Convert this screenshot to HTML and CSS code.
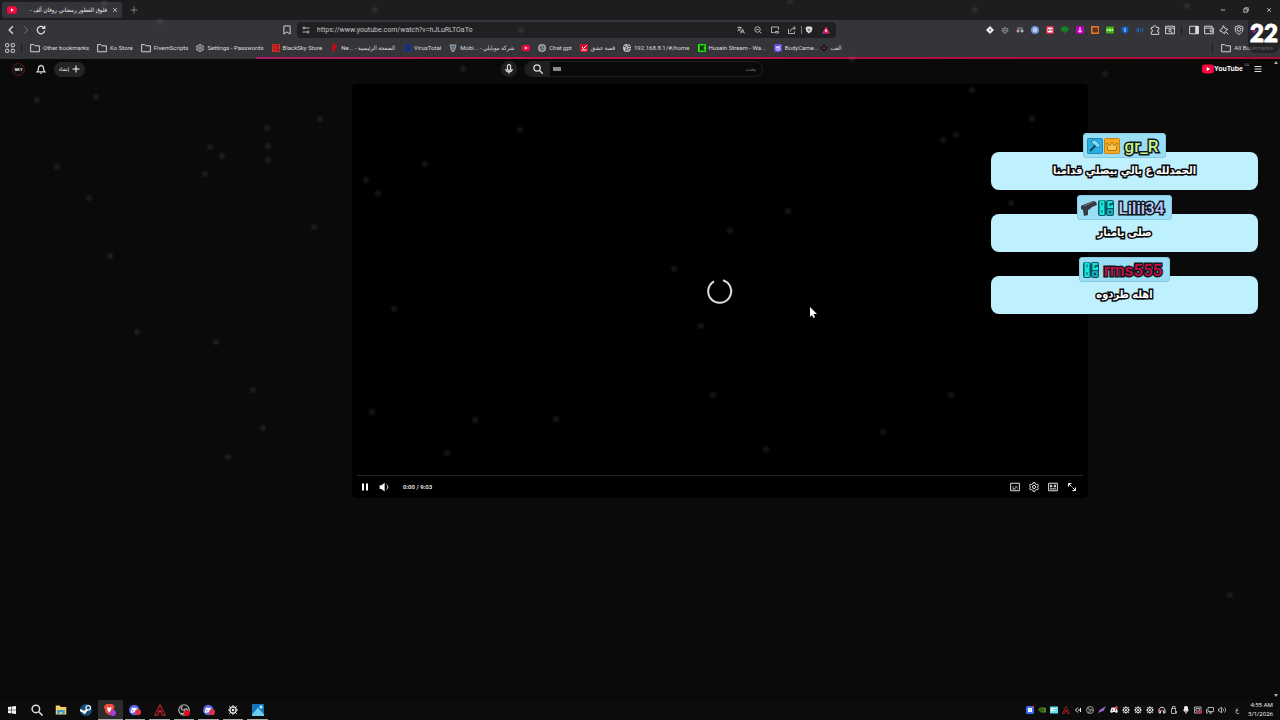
FILE: index.html
```html
<!DOCTYPE html>
<html lang="en">
<head>
<meta charset="utf-8">
<title>YouTube</title>
<link rel="stylesheet" href="styles.css">
</head>
<body>
<svg class="sprite" aria-hidden="true">
  <symbol id="yt" viewBox="0 0 16 16"><rect x="0" y="2" width="16" height="12" rx="4" fill="#f5073f"/><path d="M6.3 5.2v5.6L11 8z" fill="#fff"/></symbol>
  <symbol id="back" viewBox="0 0 16 16"><path d="M11 2 5 8l6 6"/></symbol>
  <symbol id="fwd" viewBox="0 0 16 16"><path d="m5 2 6 6-6 6"/></symbol>
  <symbol id="reload" viewBox="0 0 16 16"><path d="M14 9a6 6 0 1 1-2-5.500L14 5M14 1v4.500h-4.500"/></symbol>
  <symbol id="x" viewBox="0 0 16 16"><path d="m3 3 10 10M13 3 3 13"/></symbol>
  <symbol id="plus" viewBox="0 0 16 16"><path d="M8 1v14M1 8h14"/></symbol>
  <symbol id="min" viewBox="0 0 16 16"><path d="M2 8h12"/></symbol>
  <symbol id="restore" viewBox="0 0 16 16"><path d="M2 5h9v9H2zM5 5V2h9v9h-3"/></symbol>
  <symbol id="mark" viewBox="0 0 16 16"><path d="M3 1.500h10v13L8 11l-5 3.500z"/></symbol>
  <symbol id="tune" viewBox="0 0 16 16"><path d="M6 4h9M1 12h8"/><circle cx="4" cy="4" r="2"/><circle cx="12" cy="12" r="2"/></symbol>
  <symbol id="translate" viewBox="0 0 16 16"><path d="M1 3h8M5 1v2M8 3c-1 4-4 6-7 7M2 5c1 2 3 4 5 5M7 15l4-9 4 9M8.500 12h5"/></symbol>
  <symbol id="zoomout" viewBox="0 0 16 16"><circle cx="7" cy="7" r="5.500"/><path d="m11 11 4 4M4.500 7h5"/></symbol>
  <symbol id="search" viewBox="0 0 16 16"><circle cx="6.500" cy="6.500" r="5"/><path d="m10.500 10.500 5 5"/></symbol>
  <symbol id="laptop" viewBox="0 0 16 16"><path d="M15 8V2H1v11h6M9 14h6v-3H9z"/></symbol>
  <symbol id="share" viewBox="0 0 16 16"><path d="M1 6v9h12v-4M5 11c0-5 3-7 9-7M11 1l4 3-4 4"/></symbol>
  <symbol id="brave" viewBox="0 0 16 16"><path d="M4 1h8l3 3-2 7-5 4-5-4-2-7z" fill="#ddd"/><path d="m5 5 3 1 3-1-1 4-2 2-2-2z" fill="#777"/></symbol>
  <symbol id="bat" viewBox="0 0 16 16"><path d="M8 1 0 15h16z" fill="#e92546"/><path d="m8 6-3 5h6z" fill="#fff"/><path d="m0 15 4-6 4 6z" fill="#8b2fae"/></symbol>
  <symbol id="apps" viewBox="0 0 16 16"><rect x="1" y="1" width="5" height="5" rx="1"/><rect x="10" y="1" width="5" height="5" rx="1"/><rect x="1" y="10" width="5" height="5" rx="1"/><rect x="10" y="10" width="5" height="5" rx="1"/></symbol>
  <symbol id="folder" viewBox="0 0 16 16"><path d="M1 2.500h5l2 2h7v9.500H1z"/></symbol>
  <symbol id="gear" viewBox="0 0 16 16"><path d="m6.500 1-.5 2-2 1-2-.5L1 6l1.500 2L1 10l1 2.500 2-.5 2 1 .5 2h3l.5-2 2-1 2 .5 1-2.500L13.500 8 15 6l-1-2.500-2 .5-2-1-.5-2z"/><circle cx="8" cy="8" r="2.500"/></symbol>
  <symbol id="bsky" viewBox="0 0 16 16"><rect width="16" height="16" rx="2" fill="#e22d24"/><path d="M4 12V6l3-3h5v3L9 8l3 1v3H7l-3 3M1 5l4-4M11 15l4-4" stroke="#51171b" stroke-width="1.500" fill="none"/></symbol>
  <symbol id="ne" viewBox="0 0 16 16"><path d="M4 0h5v16H4zM9 1h4v10H9z" fill="#b90c18"/></symbol>
  <symbol id="vt" viewBox="0 0 16 16"><path d="M1 2h14v12H1l6-6z" fill="#142a78" stroke="#1d3ba6"/></symbol>
  <symbol id="mobi" viewBox="0 0 16 16"><path d="M1 1h14l-2 9-3 6H6l-3-6z" fill="#929aa5"/><path d="M4 5h8M5 8h6M6 11h4" stroke="#39414f"/></symbol>
  <symbol id="gpt" viewBox="0 0 16 16"><circle cx="8" cy="8" r="8" fill="#aaa"/><path d="m8 3 4 2.500v5L8 13l-4-2.500v-5zM4 6l4 2 4-2M8 8v5" fill="none" stroke="#333" stroke-width="1.300"/></symbol>
  <symbol id="esheeq" viewBox="0 0 16 16"><rect width="16" height="16" rx="1" fill="#d80f2b"/><path d="m4 6 3 3 6-6M3 12h10" fill="none" stroke="#fff" stroke-width="2"/></symbol>
  <symbol id="globe" viewBox="0 0 16 16"><circle cx="8" cy="8" r="8" fill="#bdbdbd"/><path d="M2 5c4 0 6 1 5 4-2 1 0 3-1 5M10 1c-2 3 0 4 4 4M10 13c-1-4 2-4 5-4" fill="none" stroke="#333" stroke-width="2"/></symbol>
  <symbol id="kick" viewBox="0 0 16 16"><path d="M0 0h16v16H0z" fill="#25e30f"/><path d="M4 2h3v4l4-4h2v3l-3 3 3 3v3h-2l-4-4v4H4z" fill="#062a05"/></symbol>
  <symbol id="body" viewBox="0 0 16 16"><rect width="16" height="16" rx="3" fill="#6846e6"/><circle cx="8" cy="9" r="4" fill="none" stroke="#fff" stroke-width="1.500"/><path d="M3 5c4 3 7 2 10-2M8 7v3h3" stroke="#fff" fill="none"/></symbol>
  <symbol id="eye" viewBox="0 0 16 16"><path d="m8 1 7 7-7 7-7-7z" fill="#151515"/><circle cx="8" cy="8" r="2.500" fill="#952a37"/></symbol>
  <symbol id="diamond" viewBox="0 0 16 16"><path d="m8 0 8 8-8 8-8-8z" fill="#eee"/><path d="m8 5 3 3-3 3-2-3z" fill="#77777c"/></symbol>
  <symbol id="robot" viewBox="0 0 16 16"><path d="m8 1 3 3h3l1 6-3 3-4 3-4-3-3-3 1-6h3z" fill="#77777b"/><path d="M4 7h3M9 7h3M6 11h4" stroke="#333" stroke-width="1.500"/></symbol>
  <symbol id="spy" viewBox="0 0 16 16"><path d="m4 2 4 1 4-1 3 5H1z" fill="#727179"/><circle cx="4" cy="10" r="3" fill="#d7958b"/><circle cx="12" cy="10" r="3" fill="#9fc3c9"/></symbol>
  <symbol id="orb" viewBox="0 0 16 16"><circle cx="8" cy="8" r="8" fill="#7096e0"/><circle cx="8" cy="8" r="3.500" fill="#adc6ef" stroke="#dae6fb"/></symbol>
  <symbol id="redbox" viewBox="0 0 16 16"><rect width="16" height="16" rx="3" fill="#d52443"/><path d="M3 3h10v10H3z" fill="#fff"/><path d="M4 8h3M9 8h3" stroke="#b51635" stroke-width="3"/></symbol>
  <symbol id="tree" viewBox="0 0 16 16"><path d="M2 2 8 0l5 2 3 5-3 4H9v5H7v-5H2L0 7z" fill="#108625"/></symbol>
  <symbol id="down" viewBox="0 0 16 16"><rect width="16" height="16" rx="2" fill="#b800ad"/><path d="M8 2v10M4 9l4 4 4-4" stroke="#fff" stroke-width="2" fill="none"/></symbol>
  <symbol id="orange" viewBox="0 0 16 16"><path d="M0 0h16v16H0z" fill="#e07628"/><path d="M4 4h9v8H4zM4 8h8" fill="#873711" stroke="#3e2d20"/></symbol>
  <symbol id="green" viewBox="0 0 16 16"><rect y="1" width="16" height="14" rx="2" fill="#41ae13"/><path d="M2 6v4M4 6v4M7 6h2v4H7zM12 6v4M14 6l-2 2 2 2" stroke="#d7ffc6" fill="none"/></symbol>
  <symbol id="bshield" viewBox="0 0 16 16"><path d="m8 0 7 3v5c0 4-4 6-7 8-3-2-7-4-7-8V3z" fill="#0b60c1"/><path d="M8 4v8" stroke="#84bcff" stroke-width="3"/></symbol>
  <symbol id="wave" viewBox="0 0 16 16"><path d="M2 5v6M5 3v10M8 5c3 2 3 4 0 6M11 3c4 3 4 7 0 10" fill="none" stroke="#1672c5" stroke-width="2"/></symbol>
  <symbol id="puzzle" viewBox="0 0 16 16"><path d="M2 4h3c-1-4 6-4 5 0h4v4c-3-1-3 4 0 3v4H2v-4c3 0 3-4 0-4z"/></symbol>
  <symbol id="tabsearch" viewBox="0 0 16 16"><path d="M1 2h14v12H1zM1 5h14"/><circle cx="8" cy="9" r="2"/><path d="m10 11 2 2"/></symbol>
  <symbol id="panel" viewBox="0 0 16 16"><path d="M1 2h14v12H1z"/><path d="M10 2h5v12h-5z" fill="#ddd"/></symbol>
  <symbol id="wallet" viewBox="0 0 16 16"><path d="M13 5V2H1v12h14V5H2M15 8h-5v3h5"/></symbol>
  <symbol id="leo" viewBox="0 0 16 16"><path d="m7 1 2 4 5 2-4 3-1 4-4-3-4-2 4-3zM11 11l4 4"/></symbol>
  <symbol id="vpn" viewBox="0 0 16 16"><path d="m8 1 6 2v5c0 3-3 5-6 7-3-2-6-4-6-7V3z"/><circle cx="8" cy="7" r="3"/></symbol>
  <symbol id="bell" viewBox="0 0 16 16"><path d="M2 12.500c2-2 2-2 2-6a4 4 0 0 1 8 0c0 4 0 4 2 6zM7 15h2M8 1v1"/></symbol>
  <symbol id="mic" viewBox="0 0 16 16"><rect x="5.500" y="1" width="5" height="9" rx="2.500"/><path d="M3 8c0 6 10 6 10 0M8 12v3"/></symbol>
  <symbol id="menu" viewBox="0 0 16 16"><path d="M1 3h14M1 8h14M1 13h14"/></symbol>
  <symbol id="pause" viewBox="0 0 16 16"><path d="M2 1h4v14H2zM10 1h4v14h-4z" fill="#fff"/></symbol>
  <symbol id="vol" viewBox="0 0 16 16"><path d="M1 5h3l5-4v14l-5-4H1z" fill="#fff"/><path d="M12 4c3 2 3 6 0 8"/></symbol>
  <symbol id="volout" viewBox="0 0 16 16"><path d="M1 6h2l4-4v12l-4-4H1zM10 5c1 2 1 4 0 6M13 3c3 3 3 7 0 10"/></symbol>
  <symbol id="cc" viewBox="0 0 16 16"><path d="M1 2h14v12H1zM4 8h2M8 8h4M4 11h5M11 11h1"/></symbol>
  <symbol id="thea" viewBox="0 0 16 16"><path d="M1 2h14v12H1zM4 5v3h2V5zM10 5v3h2V5zM3 11h10"/></symbol>
  <symbol id="full" viewBox="0 0 16 16"><path d="M7 1H1v6M1 1l6 6M15 9v6H9M15 15 9 9"/></symbol>
  <symbol id="win" viewBox="0 0 16 16"><path d="m0 2 7-1v6.500H0zM8 1l8-1v7.500H8zM0 8.500h7V15l-7-1zM8 8.500h8V16l-8-1z" fill="#f3f3f3"/></symbol>
  <symbol id="explorer" viewBox="0 0 16 16"><path d="M1 2h5l2 2h7v10H1z" fill="#f3cf69"/><path d="M3 8h10v6h-3v-3H6v3H3z" fill="#3b9bd5"/></symbol>
  <symbol id="steam" viewBox="0 0 16 16"><circle cx="8" cy="8" r="8" fill="#174e79"/><path d="m0 8 6 3 5-5" stroke="#fff" stroke-width="3"/><circle cx="11" cy="5" r="3" fill="#174e79" stroke="#fff" stroke-width="1.500"/><circle cx="6" cy="11" r="2" fill="#fff"/></symbol>
  <symbol id="lion" viewBox="0 0 16 16"><path d="M3 0h8l3 3-2 8-5 4-5-4-2-8z" fill="#f04b38"/><path d="m4 4 3 1 3-1-1 5-2 2-2-2z" fill="#fff"/><circle cx="12" cy="12" r="4" fill="#9a40d2"/></symbol>
  <symbol id="discord" viewBox="0 0 16 16"><circle cx="7" cy="8" r="7" fill="#5866e8"/><path d="M4 5h6l2 6-3 1-1-1H6l-1 1-3-1z" fill="#fff"/><circle cx="5" cy="9" r="1" fill="#5866e8"/><circle cx="12" cy="11" r="4" fill="#df3048"/></symbol>
  <symbol id="apex" viewBox="0 0 16 16"><path d="m1 15 7-14 7 14h-4L8 8l-3 7zM5 10h6" fill="none" stroke="#b91f31" stroke-width="1.500"/></symbol>
  <symbol id="obs" viewBox="0 0 16 16"><circle cx="8" cy="8" r="7" fill="#171717" stroke="#bbb"/><path d="M8 8c-4 0-5-3-2-5M8 8c3-3 5-1 5 2M8 8c2 4-1 6-4 4" fill="none" stroke="#bbb" stroke-width="1.500"/></symbol>
  <symbol id="rec" viewBox="0 0 16 16"><circle cx="8" cy="8" r="7" fill="#171717" stroke="#bbb"/><path d="M8 8c-4 0-5-3-2-5M8 8c3-3 5-1 5 2M8 8c2 4-1 6-4 4" fill="none" stroke="#bbb" stroke-width="1.500"/><circle cx="12" cy="12" r="4" fill="#e50922"/></symbol>
  <symbol id="cog" viewBox="0 0 16 16"><circle cx="8" cy="8" r="5" fill="#111" stroke="#eee" stroke-width="2"/><path d="M8 0v4M8 12v4M0 8h4M12 8h4M2 2l3 3M11 11l3 3M14 2l-3 3M5 11l-3 3" stroke="#eee" stroke-width="1.500"/><circle cx="8" cy="8" r="2" fill="#eee"/></symbol>
  <symbol id="photo" viewBox="0 0 16 16"><rect width="16" height="16" rx="1" fill="#1475bf"/><path d="m0 14 8-9 8 9v2H0z" fill="#70caef"/><circle cx="12" cy="4" r="2" fill="#d8f4ff"/></symbol>
  <symbol id="bluebox" viewBox="0 0 16 16"><rect width="16" height="16" rx="3" fill="#356cf2"/><path d="M4 4h8v8H4z" fill="#fff"/><path d="M7 7h2v2H7z" fill="#356cf2"/><circle cx="14" cy="2" r="2" fill="#e44"/></symbol>
  <symbol id="nv" viewBox="0 0 16 16"><path d="M0 8c4-7 8-6 16-4v9H6z" fill="#53871c"/><path d="M3 8c3-3 7-3 9 0-3 3-6 3-9 0z" stroke="#152208" fill="none"/></symbol>
  <symbol id="cyan" viewBox="0 0 16 16"><path d="M0 1h16v14H0z" fill="#63ddef"/><path d="M3 11V5h10M3 9h7" stroke="#fff" stroke-width="2" fill="none"/></symbol>
  <symbol id="arrow" viewBox="0 0 16 16"><path d="m8 3-5 5 5 5M13 4v8M8 8h6" stroke="#eee" stroke-width="2" fill="none"/></symbol>
  <symbol id="feather" viewBox="0 0 16 16"><path d="m0 16 3-8L16 0l-5 10-7 2z" fill="#9864d6"/></symbol>
  <symbol id="dc" viewBox="0 0 16 16"><path d="M3 3h10l3 9-4 2-2-2H6l-2 2-4-2z" fill="#eee"/><path d="M4 8h2M10 8h2" stroke="#111" stroke-width="2"/><circle cx="13" cy="3" r="3" fill="#e33548"/></symbol>
  <symbol id="head" viewBox="0 0 16 16"><path d="M2 10C1 0 15 0 14 10M2 9v5h3V9M14 9v5h-3V9" stroke="#ddd" stroke-width="2" fill="none"/><circle cx="8" cy="9" r="2" fill="#d23b48"/></symbol>
  <symbol id="usb" viewBox="0 0 16 16"><path d="M3 5h8v10H3zM5 5V1h5v4M13 10v5"/></symbol>
  <symbol id="micf" viewBox="0 0 16 16"><rect x="4" y="0" width="8" height="11" rx="3" fill="#eee"/><path d="M3 7c0 7 10 7 10 0M8 12v4"/></symbol>
  <symbol id="shot" viewBox="0 0 16 16"><path d="M1 2h13v12H1zM4 5h7v5H4z"/><circle cx="12" cy="12" r="3.500" fill="#e3203f"/></symbol>
  <symbol id="net" viewBox="0 0 16 16"><path d="M4 3h11v8H4zM9 11v3M6 14h7M1 6v8h3"/></symbol>
  <symbol id="gun" viewBox="0 0 16 16"><path d="m0 6 2-1 10-4 3 1 1 3-5 2-2 2-2 1v5l-4 1-1-6-2-1z" fill="#363a42"/><path d="m3 6 9-4" stroke="#727780"/></symbol>
  <symbol id="og" viewBox="0 0 16 16"><rect x="0" y="0" width="8" height="16" rx="2" fill="#0a5564"/><rect x="8" y="0" width="8" height="16" rx="2" fill="#0a5564"/><path d="M2.500 1.500h3v5h-3zM2.500 9h3v5h-3zM14.500 2h-4v5h3.500V5M2 7.500h4" fill="none" stroke="#14ead8" stroke-width="2"/><rect x="9" y="9" width="6" height="6" rx="1" fill="#16a9b6"/><path d="M11 11h2v2h-2z" fill="#0a4655"/></symbol>
  <symbol id="hammer" viewBox="0 0 16 16"><rect x=".5" y=".5" width="15" height="15" rx="1" fill="#27afe4" stroke="#175f83"/><path d="m3 13 6-6" stroke="#17435a" stroke-width="2"/><path d="m5 3 3-1 5 5-2 3-3-3-3-2z" fill="#7edbff" stroke="#17435a"/></symbol>
  <symbol id="crown" viewBox="0 0 16 16"><rect x=".5" y=".5" width="15" height="15" rx="1" fill="#f7a918" stroke="#89601e"/><path d="m3 5 3 3 2-4 2 4 3-3-1 7H4z" fill="#ffc64e" stroke="#5c421a"/></symbol>
</svg>

<header class="browser">
  <div class="tabstrip">
    <div class="tab"><svg class="i"><use href="#yt"/></svg><span class="tab-title" dir="rtl">فلوق الفطور رمضاني روفان ألف -</span><button class="b" aria-label="Close tab"><svg class="i s bold"><use href="#x"/></svg></button></div>
    <button class="b new-tab" aria-label="New tab"><svg class="i s"><use href="#plus"/></svg></button>
    <div class="window-buttons"><button class="b" aria-label="Minimize"><svg class="i s bold"><use href="#min"/></svg></button><button class="b" aria-label="Restore"><svg class="i s bold"><use href="#restore"/></svg></button><button class="b" aria-label="Close"><svg class="i s bold"><use href="#x"/></svg></button></div>
  </div>
  <div class="toolbar">
    <nav class="nav"><button class="b" aria-label="Back"><svg class="i bold"><use href="#back"/></svg></button><button class="b dim" aria-label="Forward"><svg class="i"><use href="#fwd"/></svg></button><button class="b" aria-label="Reload"><svg class="i bold"><use href="#reload"/></svg></button></nav>
    <button class="b save" aria-label="Bookmark"><svg class="i"><use href="#mark"/></svg></button>
    <div class="address"><svg class="i s"><use href="#tune"/></svg><input aria-label="Address" value="https://www.youtube.com/watch?v=hJLuRLTOaTo">
      <button class="b" aria-label="Translate"><svg class="i s"><use href="#translate"/></svg></button><button class="b" aria-label="Zoom"><svg class="i s"><use href="#zoomout"/></svg></button><button class="b" aria-label="Install"><svg class="i s"><use href="#laptop"/></svg></button><button class="b" aria-label="Share"><svg class="i s"><use href="#share"/></svg></button><span class="bar"></span><button class="b" aria-label="Shields"><svg class="i s"><use href="#brave"/></svg></button><button class="b" aria-label="Rewards"><svg class="i s"><use href="#bat"/></svg></button></div>
    <div class="extensions">
      <button class="b" aria-label="Extension 1"><svg class="i s"><use href="#diamond"/></svg></button><button class="b" aria-label="Extension 2"><svg class="i s"><use href="#robot"/></svg></button><button class="b" aria-label="Extension 3"><svg class="i s"><use href="#spy"/></svg></button><button class="b" aria-label="Extension 4"><svg class="i s"><use href="#orb"/></svg></button><button class="b" aria-label="Extension 5"><svg class="i s"><use href="#redbox"/></svg></button><button class="b" aria-label="Extension 6"><svg class="i s"><use href="#tree"/></svg></button><button class="b" aria-label="Extension 7"><svg class="i s"><use href="#down"/></svg></button><button class="b" aria-label="Extension 8"><svg class="i s"><use href="#orange"/></svg></button><button class="b" aria-label="Extension 9"><svg class="i s"><use href="#green"/></svg></button><button class="b" aria-label="Extension 10"><svg class="i s"><use href="#bshield"/></svg></button><button class="b" aria-label="Extension 11"><svg class="i s"><use href="#wave"/></svg></button><button class="b" aria-label="Extensions"><svg class="i"><use href="#puzzle"/></svg></button><button class="b" aria-label="Search tabs"><svg class="i"><use href="#tabsearch"/></svg></button><span class="bar dark"></span><button class="b" aria-label="Sidebar"><svg class="i"><use href="#panel"/></svg></button><button class="b" aria-label="Wallet"><svg class="i"><use href="#wallet"/></svg></button><button class="b" aria-label="Leo"><svg class="i"><use href="#leo"/></svg></button><button class="b" aria-label="VPN"><svg class="i"><use href="#vpn"/></svg></button><button class="b" aria-label="Profile"><svg class="i s"><use href="#down"/></svg></button>
    </div>
  </div>
  <nav class="bookmarks">
    <button class="b" aria-label="Apps"><svg class="i"><use href="#apps"/></svg></button><span class="bar dark"></span>
    <a href="#"><svg class="i"><use href="#folder"/></svg>Other bookmarks</a><a href="#"><svg class="i"><use href="#folder"/></svg>Ko Store</a><a href="#"><svg class="i"><use href="#folder"/></svg>FivemScripts</a><a href="#"><svg class="i s"><use href="#gear"/></svg>Settings - Passwords</a><a href="#"><svg class="i s"><use href="#bsky"/></svg>BlackSky Store</a><a href="#"><svg class="i s"><use href="#ne"/></svg><span>Ne... - <bdi>الصفحة الرئيسية</bdi></span></a><a href="#"><svg class="i s"><use href="#vt"/></svg>VirusTotal</a><a href="#"><svg class="i s"><use href="#mobi"/></svg><span>Mobi... - <bdi>شركة موبايلي</bdi></span></a><a href="#" aria-label="YouTube"><svg class="i s"><use href="#yt"/></svg></a><a href="#"><svg class="i s"><use href="#gpt"/></svg>Chat gpt</a><a href="#"><svg class="i s"><use href="#esheeq"/></svg>قصة عشق</a><a href="#"><svg class="i s"><use href="#globe"/></svg>192.168.8.1/#/home</a><a href="#"><svg class="i s"><use href="#kick"/></svg>Husein Stream - Wa...</a><a href="#"><svg class="i s"><use href="#body"/></svg>BodyCame...</a><a href="#" class="tight"><svg class="i s"><use href="#eye"/></svg>العب</a>
    <a href="#" class="all"><span class="bar dark"></span><svg class="i"><use href="#folder"/></svg>All Bookmarks</a>
  </nav>
  <div class="progress"></div>
</header>

<main class="page">
  <div class="masthead">
    <div class="account"><span class="avatar">SKY</span><button class="b" aria-label="Notifications"><svg class="i bold"><use href="#bell"/></svg></button><button class="create"><span>إنشاء</span><svg class="i s bold"><use href="#plus"/></svg></button></div>
    <div class="finder"><button class="b round" aria-label="Voice search"><svg class="i bold"><use href="#mic"/></svg></button><div class="searchbox"><button class="b" aria-label="Search"><svg class="i bold"><use href="#search"/></svg></button><span class="keys"></span><input dir="rtl" aria-label="Search videos" placeholder="بحث"></div></div>
    <div class="brand"><a href="#" class="logo"><svg class="logo-icon"><use href="#yt"/></svg>YouTube<sup>SA</sup></a><button class="b" aria-label="Menu"><svg class="i s bold"><use href="#menu"/></svg></button></div>
  </div>
  <section class="player">
    <div class="stage"><svg class="spinner" viewBox="0 0 28 28"><path d="M17 3.300a11.500 11.500 0 1 1-9 1"/></svg></div>
    <div class="track"></div>
    <div class="controls"><button class="b" aria-label="Pause"><svg class="i s"><use href="#pause"/></svg></button><button class="b" aria-label="Mute"><svg class="i"><use href="#vol"/></svg></button><span class="time">0:00 / 9:03</span><button class="b" aria-label="Subtitles"><svg class="i"><use href="#cc"/></svg></button><button class="b" aria-label="Settings"><svg class="i"><use href="#gear"/></svg></button><button class="b" aria-label="Theater"><svg class="i"><use href="#thea"/></svg></button><button class="b" aria-label="Full screen"><svg class="i s bold"><use href="#full"/></svg></button></div>
  </section>
</main>

<footer class="taskbar">
  <div class="tasks"><button class="b" aria-label="Start"><svg class="i s"><use href="#win"/></svg></button><button class="b" aria-label="Search"><svg class="i l bold"><use href="#search"/></svg></button><button class="b" aria-label="Files"><svg class="i l"><use href="#explorer"/></svg></button><button class="b" aria-label="Steam"><svg class="i l"><use href="#steam"/></svg></button><button class="b open active" aria-label="Brave"><svg class="i l"><use href="#lion"/></svg></button><button class="b open" aria-label="Discord"><svg class="i l"><use href="#discord"/></svg></button><button class="b open" aria-label="Game"><svg class="i l"><use href="#apex"/></svg></button><button class="b open" aria-label="OBS"><svg class="i l"><use href="#rec"/></svg></button><button class="b open" aria-label="Discord 2"><svg class="i l"><use href="#discord"/></svg></button><button class="b open" aria-label="Tools"><svg class="i"><use href="#cog"/></svg></button><button class="b open" aria-label="Photos"><svg class="i l"><use href="#photo"/></svg></button></div>
  <div class="tray"><svg class="i s"><use href="#bluebox"/></svg><svg class="i s"><use href="#nv"/></svg><svg class="i s"><use href="#cyan"/></svg><svg class="i s"><use href="#apex"/></svg><svg class="i s"><use href="#arrow"/></svg><svg class="i s"><use href="#obs"/></svg><svg class="i s"><use href="#feather"/></svg><svg class="i s"><use href="#dc"/></svg><svg class="i s"><use href="#cog"/></svg><svg class="i s"><use href="#cog"/></svg><svg class="i s"><use href="#cog"/></svg><svg class="i s"><use href="#head"/></svg><svg class="i s"><use href="#usb"/></svg><svg class="i s"><use href="#micf"/></svg><svg class="i s"><use href="#shot"/></svg><svg class="i s"><use href="#net"/></svg><svg class="i s"><use href="#volout"/></svg><span class="lang">ع</span><time class="clock">4:55 AM<br>3/1/2026</time></div>
</footer>

<svg class="snow" id="snow" aria-hidden="true"></svg>
<aside class="chat">
  <article><h2 class="lime"><svg><use href="#hammer"/></svg><svg><use href="#crown"/></svg><span>gr_R</span></h2><p dir="rtl">الحمدلله ع بالي بيصلي قدامنا</p></article>
  <article><h2 class="ice"><svg><use href="#gun"/></svg><svg><use href="#og"/></svg><span>Lilii34</span></h2><p dir="rtl">صلى يامنار</p></article>
  <article><h2 class="crimson"><svg><use href="#og"/></svg><span>rms555</span></h2><p dir="rtl">اهله طردوه</p></article>
</aside>
<div class="counter">22</div>
<div class="scroll-up"></div><div class="scroll-down"></div>
<svg class="cursor" viewBox="0 0 8 12" aria-hidden="true"><path d="M1 0v10l2-2 1.500 3 1.500-1-1.500-3H8z" fill="#fff"/></svg>
<script src="snow.js"></script>
</body>
</html>
```
FILE: styles.css
```css
* { box-sizing: border-box; }
body { margin: 0; min-height: 100vh; display: flex; flex-direction: column; background: #0a0a0a; color: #ddd; font: 6px/8px Roboto, "DejaVu Sans Condensed", sans-serif; overflow: hidden; }
a { color: inherit; text-decoration: none; }
input { min-width: 0; border: 0; padding: 0; outline: 0; background: none; color: inherit; font: inherit; }
.sprite { position: absolute; width: 0; height: 0; }
symbol [fill]:not([fill="none"]):not([stroke]) { stroke: none; }
.i { width: 10px; height: 10px; flex: none; fill: none; stroke: currentColor; stroke-width: 1.5; }
.i.s { width: 8px; height: 8px; }
.i.l { width: 12px; height: 12px; }
.i.bold { stroke-width: 2; }
.b { display: flex; align-items: center; justify-content: center; flex: none; width: 15px; height: 16px; padding: 0; border: 0; background: none; color: inherit; }
.bar { width: 1px; height: 8px; margin: 0 4px; background: #777; flex: none; }
.bar.dark { background: #1d1d20; }
.dim { color: #77777c; }

.tabstrip { display: flex; align-items: center; height: 20px; padding: 0 4px 0 2px; background: #1d1d20; }
.tab { display: flex; align-items: center; width: 120px; height: 16px; padding-left: 5px; border-radius: 3px; background: #353539; }
.tab-title { flex: 1; padding-left: 6px; white-space: nowrap; color: #eee; font: 6px/10px "DejaVu Sans Condensed", "DejaVu Sans", sans-serif; }
.tab .i.s { width: 6px; height: 6px; }
.new-tab { margin-left: 4px; color: #999; }
.window-buttons { display: flex; margin-left: auto; gap: 8px; }
.window-buttons .i.s { width: 6px; height: 6px; }

.toolbar { display: flex; align-items: center; height: 20px; padding-left: 3px; background: #353539; }
.nav { display: flex; }
.save { margin-left: 18%; margin-right: 4px; padding-left: 3px; }
.address { display: flex; align-items: center; flex: 0 1 539px; height: 16px; padding: 0 1px 0 5px; border-radius: 4px; background: #202023; }
.address input { flex: 1; margin-left: 7px; font-size: 7px; line-height: 12px; color: #c4c4c4; }
.address .b { width: 17px; }
.address .bar { margin: 0 -1px 0 0; }
.extensions { display: flex; align-items: center; margin-left: auto; margin-right: 19px; }

.bookmarks { display: flex; align-items: center; height: 17px; padding: 0 7px 2px 2px; gap: 8px; background: #353539; white-space: nowrap; }
.bookmarks .bar { margin: 0 0 0 -4px; }
.bookmarks a { display: flex; align-items: center; gap: 3px; }
.bookmarks .tight { margin-left: -7px; }
.bookmarks .all { margin-left: auto; }
.bookmarks .all .bar { margin: 0 5px 0 0; }
.progress { height: 2px; background: linear-gradient(90deg, #353539 20%, #a91d67 20%, #bd1746 40%, #a50d35); }

.page { flex: 1; }
.masthead { display: grid; grid-template-columns: 1fr auto 1fr; align-items: center; height: 20px; padding-right: 16px; }
.account, .finder, .brand, .searchbox, .create, .logo { display: flex; align-items: center; }
.account { padding-left: 12px; gap: 8px; }
.avatar { width: 13px; height: 13px; border: 1px solid #5c1620; border-radius: 50%; background: #111; color: #fff; font: bold 4px/11px "Liberation Sans", sans-serif; text-align: center; }
.account .b { width: 16px; }
.create { gap: 3px; height: 15px; margin-left: -3px; padding: 0 5px; border: 0; border-radius: 8px; background: #242424; color: #fff; font: 5px/8px "DejaVu Sans Condensed", sans-serif; }
.finder { gap: 7px; }
.round { width: 16px; border-radius: 50%; background: #202020; }
.searchbox { width: 239px; height: 16px; border: 1px solid #202020; border-radius: 8px; overflow: hidden; }
.searchbox .b { width: 25px; background: #202020; }
.keys { width: 8px; height: 4px; margin-left: 3px; background: #888; }
.searchbox input { flex: 1; padding-right: 6px; }
.brand { justify-content: flex-end; gap: 4px; padding-right: 1px; }
.brand .b { width: 10px; }
.logo { color: #fff; font: bold 7px/12px "Liberation Sans", sans-serif; }
.logo-icon { width: 12px; height: 12px; }
.logo sup { align-self: flex-start; font: 4px/4px Roboto, sans-serif; color: #888; margin-left: 1px; }

.player { display: flex; flex-direction: column; width: 57.5%; aspect-ratio: 16 / 9; margin: 5px 0 0 27.5%; border-radius: 5px; background: #000; }
.stage { flex: 1; display: flex; align-items: center; justify-content: center; padding-top: 23px; }
.spinner { width: 28px; height: 28px; fill: none; stroke: #ddd; stroke-width: 2; }
.track { height: 1px; margin: 0 5px; background: #242424; }
.controls { display: flex; align-items: center; height: 22px; padding: 0 7px 0 3px; color: #eee; }
.controls .b { width: 19px; }
.time { flex: 1; margin-left: 10px; font-weight: 600; }

.taskbar { display: flex; justify-content: space-between; height: 20px; background: #0c0c0c; }
.tasks { display: grid; grid-template-columns: repeat(11, 1fr); width: 270px; }
.tasks .b { width: auto; height: 20px; }
.tasks .open { border-bottom: 1px solid #aaa; margin: 0 2px; }
.tasks .active { background: #2c2c2c; margin: 0; }
.tray { display: flex; align-items: center; gap: 4px; padding-right: 7px; color: #ddd; }
.lang { width: 14px; text-align: center; font-size: 7px; }
.clock { font: 6px/9px "Open Sans", sans-serif; text-align: right; color: #fff; }

.snow { position: absolute; inset: 0; width: 100%; height: 100%; pointer-events: none; fill: #999; fill-opacity: .14; filter: blur(1px); }
.chat { position: absolute; top: 133px; right: 22px; width: 267px; display: flex; flex-direction: column; gap: 5px; }
.chat article { display: flex; flex-direction: column; align-items: center; }
.chat h2 { z-index: 1; display: flex; align-items: center; gap: 1px; height: 25px; margin: 0; padding: 0 7px 0 3px; border: 1px solid #83cbe3; border-radius: 3px; background: #9bddf4; font: 500 17px/24px Roboto, sans-serif; -webkit-text-stroke: 3px #101820; paint-order: stroke fill; }
.chat h2 svg { width: 16px; height: 16px; }
.chat h2 span { margin-left: 4px; }
.lime { color: #c8f58b; }
.ice { color: #bcc8f5; }
.chat .crimson { color: #c70d43; }
.chat p { width: 100%; height: 38px; margin: -6px 0 0; border-radius: 8px; background: #bff0fd; color: #fff; font: bold 11px/38px "DejaVu Sans Condensed", "DejaVu Sans", sans-serif; text-align: center; -webkit-text-stroke: 3px #080808; paint-order: stroke fill; }
.counter { position: absolute; top: 15px; right: 0; width: 32px; height: 38px; border-radius: 8px; background: rgba(30, 30, 32, .7); color: #fff; font: 900 24px/36px Lato, sans-serif; text-align: center; -webkit-text-stroke: 1px #fff; }
.scroll-up, .scroll-down { position: absolute; right: 2px; border: 2px solid transparent; }
.scroll-up { top: 59px; border-bottom: 3px solid #aaa; }
.scroll-down { bottom: 21px; border-top: 3px solid #aaa; }
.cursor { position: absolute; left: 809px; top: 307px; width: 8px; height: 12px; }
```
FILE: snow.js
```js
const flakes = [[37,100],[96,97],[320,119],[267,128],[268,146],[268,160],[210,147],[222,156],[205,174],[57,167],[89,198],[314,227],[110,256],[394,309],[137,332],[216,342],[253,390],[263,428],[372,412],[228,457],[475,420],[556,419],[447,453],[366,180],[378,193],[425,164],[520,130],[788,211],[730,231],[674,269],[701,326],[713,395],[883,432],[951,395],[766,449],[943,140],[956,135],[972,90],[1032,119],[1011,203],[1105,74],[1230,595],[463,69],[104,3],[160,21],[375,10],[521,30],[790,1],[852,59],[975,10],[1187,6]];
const snow = document.getElementById("snow");
for (const [x, y] of flakes) {
  const c = document.createElementNS("http://www.w3.org/2000/svg", "circle");
  c.setAttribute("cx", x);
  c.setAttribute("cy", y);
  c.setAttribute("r", 3);
  snow.append(c);
}
```
